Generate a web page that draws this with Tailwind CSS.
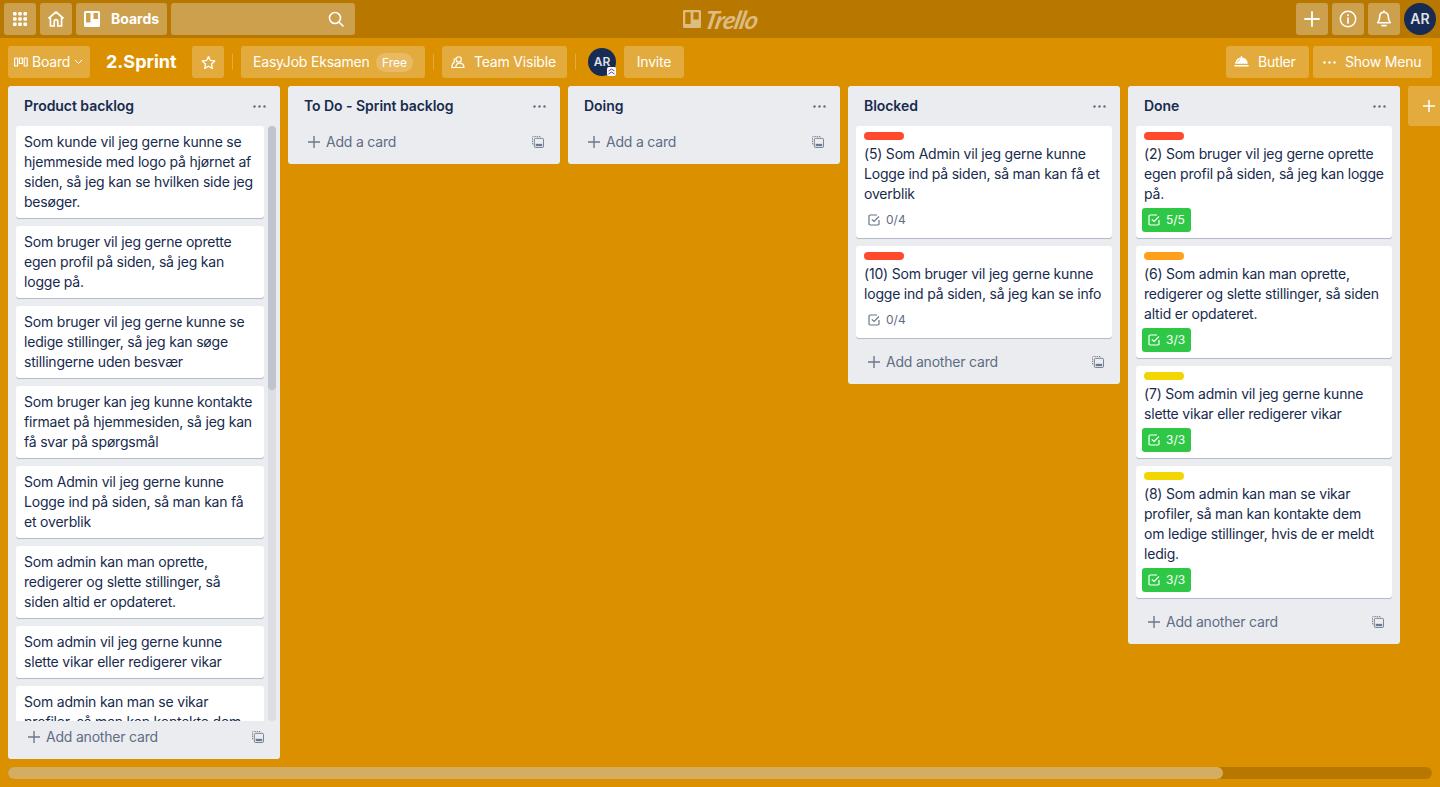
<!DOCTYPE html>
<html lang="en">
<head>
    <meta charset="UTF-8">
    <meta name="viewport" content="width=device-width, initial-scale=1.0">
    <title>2.Sprint | Trello</title>
    <script src="https://cdn.jsdelivr.net/npm/@tailwindcss/browser@4"></script>
</head>
<body class="h-[787px] w-[1440px] overflow-hidden bg-[#db9000] font-['Inter','Liberation_Sans',sans-serif] text-sm tracking-[-0.2px] text-[#172b4d] antialiased">

    <!-- top bar -->
    <header class="relative flex h-[38px] items-center gap-1 bg-[#b87800] px-1 text-white">
        <button class="flex h-8 w-8 items-center justify-center rounded-[3px] bg-white/30">
            <svg width="14" height="14" viewBox="0 0 14 14" fill="currentColor"><rect x="0" y="0" width="3.6" height="3.6" rx="1"/><rect x="5.2" y="0" width="3.6" height="3.6" rx="1"/><rect x="10.4" y="0" width="3.6" height="3.6" rx="1"/><rect x="0" y="5.2" width="3.6" height="3.6" rx="1"/><rect x="5.2" y="5.2" width="3.6" height="3.6" rx="1"/><rect x="10.4" y="5.2" width="3.6" height="3.6" rx="1"/><rect x="0" y="10.4" width="3.6" height="3.6" rx="1"/><rect x="5.2" y="10.4" width="3.6" height="3.6" rx="1"/><rect x="10.4" y="10.4" width="3.6" height="3.6" rx="1"/></svg>
        </button>
        <button class="flex h-8 w-8 items-center justify-center rounded-[3px] bg-white/30">
            <svg width="18" height="18" viewBox="0 0 18 18" fill="none" stroke="currentColor" stroke-width="1.7" stroke-linejoin="round"><path d="M1.5 8.5 9 1.8l7.5 6.7M3.4 7v9h3.8v-4.6a1.8 1.8 0 0 1 3.6 0V16h3.8V7"/></svg>
        </button>
        <button class="flex h-8 w-[91px] items-center gap-[11px] rounded-[3px] bg-white/30 pl-2 font-bold tracking-normal">
            <svg width="16" height="16" viewBox="0 0 16 16" fill="currentColor"><path fill-rule="evenodd" d="M1.5 0h13A1.5 1.5 0 0 1 16 1.5v13a1.5 1.5 0 0 1-1.500 1.500h-13A1.500 1.500 0 0 1 0 14.500v-13A1.500 1.500 0 0 1 1.500 0ZM2 2v9.500h4.500V2H2Zm7.500 0v6H14V2H9.500Z"/></svg>
            <span>Boards</span>
        </button>
        <div class="flex h-8 w-[184px] items-center justify-end rounded-[3px] bg-white/30 pr-[11px]">
            <svg width="16" height="16" viewBox="0 0 16 16" fill="none" stroke="currentColor" stroke-width="1.600"><circle cx="7" cy="7" r="5.500"/><path d="m11 11 4 4" stroke-linecap="round"/></svg>
        </div>
        <div class="absolute top-0 left-[683px] flex h-[38px] items-center gap-[4px] text-[#dcbc80]">
            <svg width="18" height="18" viewBox="0 0 16 16" fill="currentColor"><path fill-rule="evenodd" d="M1.200 0h13.600A1.200 1.200 0 0 1 16 1.200v13.600a1.200 1.200 0 0 1-1.200 1.200H1.200A1.200 1.200 0 0 1 0 14.800V1.200A1.200 1.200 0 0 1 1.200 0ZM2 2v10.500h4.800V2H2Zm7.200 0v6.500H14V2H9.200Z"/></svg>
            <span class="inline-block -skew-x-[12deg] font-['Lato',sans-serif] text-[25px] leading-none font-bold tracking-[-0.8px] italic">Trello</span>
        </div>
        <div class="flex-1"></div>
        <button class="flex h-8 w-8 items-center justify-center rounded-[3px] bg-white/30">
            <svg width="16" height="16" viewBox="0 0 16 16" fill="none" stroke="currentColor" stroke-width="1.800" stroke-linecap="round"><path d="M8 1v14M1 8h14"/></svg>
        </button>
        <button class="flex h-8 w-8 items-center justify-center rounded-[3px] bg-white/30">
            <svg width="18" height="18" viewBox="0 0 18 18" fill="none" stroke="currentColor" stroke-width="1.500"><circle cx="9" cy="9" r="7.700"/><path d="M9 8v5" stroke-width="1.700" stroke-linecap="round"/><circle cx="9" cy="5.300" r="1" fill="currentColor" stroke="none"/></svg>
        </button>
        <button class="flex h-8 w-8 items-center justify-center rounded-[3px] bg-white/30">
            <svg width="16" height="18" viewBox="0 0 16 18" fill="none" stroke="currentColor" stroke-width="1.600" stroke-linejoin="round"><path d="M8 2.200c-2.700 0-4.300 2-4.300 4.600 0 3.300-.8 4.500-2 6h12.600c-1.200-1.500-2-2.700-2-6 0-2.600-1.600-4.600-4.300-4.600Z"/><path d="M6 15.600h4" stroke-linecap="round"/><path d="M8 1v1" stroke-linecap="round"/></svg>
        </button>
        <div class="flex h-8 w-8 items-center justify-center rounded-full bg-[#172b54] text-sm font-semibold tracking-normal text-[#dfe1e6]">AR</div>
    </header>

    <!-- board bar -->
    <div class="flex h-[48px] items-start justify-between pt-2 pr-2 pl-2 text-white">
        <div class="flex items-center">
            <button class="flex h-8 w-[82px] items-center gap-[4px] rounded-[3px] bg-white/24 pl-[6px]">
                <svg width="14" height="12" viewBox="0 0 14 12" fill="none" stroke="currentColor" stroke-width="1.200"><rect x=".6" y="2" width="3" height="8" rx=".6"/><rect x="5.400" y="2" width="3" height="5.500" rx=".6"/><rect x="10.200" y="2" width="3" height="8" rx=".6"/></svg>
                <span>Board</span>
                <svg width="9" height="6" viewBox="0 0 9 6" fill="none" stroke="currentColor" stroke-width="1"><path d="m1 1 3.500 3.500L8 1"/></svg>
            </button>
            <h1 class="ml-4 w-[70px] text-lg font-bold tracking-normal whitespace-nowrap">2.Sprint</h1>
            <button class="ml-4 flex h-8 w-8 items-center justify-center rounded-[3px] bg-white/24">
                <svg width="15" height="15" viewBox="0 0 16 16" fill="none" stroke="currentColor" stroke-width="1.400" stroke-linejoin="round"><path d="m8 1.500 2 4.300 4.700.6-3.500 3.200.9 4.700L8 12l-4.100 2.300.9-4.700L1.300 6.400 6 5.800 8 1.500Z"/></svg>
            </button>
            <span class="mx-2 h-4 w-px bg-white/24"></span>
            <button class="flex h-8 w-[184px] items-center justify-between rounded-[3px] bg-white/24 pr-3 pl-3 whitespace-nowrap">
                <span>EasyJob Eksamen</span>
                <span class="rounded-full bg-white/20 px-[6px] py-px text-xs leading-[17px] tracking-normal">Free</span>
            </button>
            <span class="mx-2 h-4 w-px bg-white/24"></span>
            <button class="flex h-8 w-[125px] items-center gap-[9px] rounded-[3px] bg-white/24 pl-[9px] whitespace-nowrap">
                <svg width="14" height="14" viewBox="0 0 16 16" fill="none" stroke="currentColor" stroke-width="1.300" stroke-linejoin="round"><circle cx="8.800" cy="5" r="3"/><path d="M5.500 14.300h9.300c0-3-1.900-5-5-5s-4.300 2-4.300 5Z"/><path d="M5.200 3.800C3 5 3.200 7.200 4 8 2.200 9 1 11 1 14.300h4.500"/></svg>
                <span>Team Visible</span>
            </button>
            <span class="mx-2 h-4 w-px bg-white/24"></span>
            <div class="relative ml-[4px] flex h-7 w-7 items-center justify-center rounded-full bg-[#172b54] text-xs font-semibold tracking-normal text-[#dfe1e6]">
                AR
                <span class="absolute right-0 bottom-0 flex h-[9px] w-[9px] items-center justify-center rounded-[2px] bg-white">
                    <svg width="7" height="7" viewBox="0 0 7 7" fill="none" stroke="#5243aa" stroke-width="1"><path d="m.5 3 3-2 3 2M.5 6l3-2 3 2"/></svg>
                </span>
            </div>
            <button class="ml-2 h-8 w-[60px] rounded-[3px] bg-white/24">Invite</button>
        </div>
        <div class="flex items-center gap-1">
            <button class="flex h-8 w-[83px] items-center gap-[9px] rounded-[3px] bg-white/24 pl-[8px]">
                <svg width="15" height="14" viewBox="0 0 15 14" fill="currentColor"><path d="M7.500 2.500C3.800 2.500 1.500 5.300 1.200 8.800h12.600C13.500 5.300 11.200 2.500 7.500 2.500Z"/><rect x="6.800" y="1" width="1.400" height="2"/><rect x=".4" y="10" width="14.200" height="1.500"/><path d="M3.200 7.500C3.600 6 4.700 5 6 4.600" fill="none" stroke="#e3aa3d" stroke-width=".8"/></svg>
                <span>Butler</span>
            </button>
            <button class="flex h-8 w-[119px] items-center gap-[9px] rounded-[3px] bg-white/24 pl-[10px]">
                <svg width="13" height="3" viewBox="0 0 13 3" fill="currentColor"><circle cx="1.500" cy="1.500" r="1.200"/><circle cx="6.500" cy="1.500" r="1.200"/><circle cx="11.500" cy="1.500" r="1.200"/></svg>
                <span>Show Menu</span>
            </button>
        </div>
    </div>

    <!-- lists -->
    <main class="flex h-[673px] items-start gap-2 pl-2">

        <section class="flex h-[673px] w-[272px] flex-none flex-col rounded-[3px] bg-[#ebecf0]">
            <div class="flex h-10 flex-none items-center justify-between pr-[14px] pl-4 font-semibold tracking-[-0.05px]">
                <h2>Product backlog</h2>
                <svg width="13" height="3" viewBox="0 0 13 3" fill="#5e6c84"><circle cx="1.500" cy="1.500" r="1.200"/><circle cx="6.500" cy="1.500" r="1.200"/><circle cx="11.500" cy="1.500" r="1.200"/></svg>
            </div>
            <div class="flex min-h-0 flex-1 gap-1 pr-1 pl-2">
                <div class="flex min-h-0 w-[248px] flex-none flex-col gap-2 overflow-hidden">
                    <div class="flex-none rounded-[3px] bg-white px-2 pt-1.5 pb-1.5 leading-5 shadow-[0_1px_0_#b3bac9]"><p>Som kunde vil jeg gerne kunne se hjemmeside med logo på hjørnet af siden, så jeg kan se hvilken side jeg besøger.</p></div>
                    <div class="flex-none rounded-[3px] bg-white px-2 pt-1.5 pb-1.5 leading-5 shadow-[0_1px_0_#b3bac9]"><p>Som bruger vil jeg gerne oprette egen profil på siden, så jeg kan logge på.</p></div>
                    <div class="flex-none rounded-[3px] bg-white px-2 pt-1.5 pb-1.5 leading-5 shadow-[0_1px_0_#b3bac9]"><p>Som bruger vil jeg gerne kunne se ledige stillinger, så jeg kan søge stillingerne uden besvær</p></div>
                    <div class="flex-none rounded-[3px] bg-white px-2 pt-1.5 pb-1.5 leading-5 shadow-[0_1px_0_#b3bac9]"><p>Som bruger kan jeg kunne kontakte firmaet på hjemmesiden, så jeg kan få svar på spørgsmål</p></div>
                    <div class="flex-none rounded-[3px] bg-white px-2 pt-1.5 pb-1.5 leading-5 shadow-[0_1px_0_#b3bac9]"><p>Som Admin vil jeg gerne kunne Logge ind på siden, så man kan få et overblik</p></div>
                    <div class="flex-none rounded-[3px] bg-white px-2 pt-1.5 pb-1.5 leading-5 shadow-[0_1px_0_#b3bac9]"><p>Som admin kan man oprette, redigerer og slette stillinger, så siden altid er opdateret.</p></div>
                    <div class="flex-none rounded-[3px] bg-white px-2 pt-1.5 pb-1.5 leading-5 shadow-[0_1px_0_#b3bac9]"><p>Som admin vil jeg gerne kunne slette vikar eller redigerer vikar</p></div>
                    <div class="flex-none rounded-[3px] bg-white px-2 pt-1.5 pb-1.5 leading-5 shadow-[0_1px_0_#b3bac9]"><p>Som admin kan man se vikar profiler, så man kan kontakte dem om ledige stillinger, hvis de er meldt ledig.</p></div>
                </div>
                <div class="h-full w-2 rounded-full bg-[#dcdee4]">
                    <div class="h-[264px] rounded-full bg-[#bfc4ce]"></div>
                </div>
            </div>
            <div class="flex h-[38px] flex-none items-start justify-between pt-[6px] pr-4 pl-5 text-[#5e6c84]">
                <span class="flex items-center gap-[6px] leading-5">
                    <svg width="12" height="12" viewBox="0 0 12 12" fill="none" stroke="#6b778c" stroke-width="1.400"><path d="M6 0v12M0 6h12"/></svg>
                    Add another card
                </span>
                <svg class="mt-1" width="12" height="12" viewBox="0 0 13 13" fill="none" stroke="#6b778c" stroke-width="1"><path d="M.5 9V1.500a1 1 0 0 1 1-1H9" stroke-dasharray="1.500 1"/><rect x="2.500" y="2.500" width="10" height="10" rx="1.500"/><rect x="4" y="8.500" width="7" height="2.500" fill="#6b778c" stroke="none"/></svg>
            </div>
        </section>

        <section class="w-[272px] flex-none rounded-[3px] bg-[#ebecf0]">
            <div class="flex h-10 items-center justify-between pr-[14px] pl-4 font-semibold tracking-[-0.05px]">
                <h2>To Do - Sprint backlog</h2>
                <svg width="13" height="3" viewBox="0 0 13 3" fill="#5e6c84"><circle cx="1.500" cy="1.500" r="1.200"/><circle cx="6.500" cy="1.500" r="1.200"/><circle cx="11.500" cy="1.500" r="1.200"/></svg>
            </div>
            <div class="flex h-[38px] items-start justify-between pt-[6px] pr-4 pl-5 text-[#5e6c84]">
                <span class="flex items-center gap-[6px] leading-5">
                    <svg width="12" height="12" viewBox="0 0 12 12" fill="none" stroke="#6b778c" stroke-width="1.400"><path d="M6 0v12M0 6h12"/></svg>
                    Add a card
                </span>
                <svg class="mt-1" width="12" height="12" viewBox="0 0 13 13" fill="none" stroke="#6b778c" stroke-width="1"><path d="M.5 9V1.500a1 1 0 0 1 1-1H9" stroke-dasharray="1.500 1"/><rect x="2.500" y="2.500" width="10" height="10" rx="1.500"/><rect x="4" y="8.500" width="7" height="2.500" fill="#6b778c" stroke="none"/></svg>
            </div>
        </section>

        <section class="w-[272px] flex-none rounded-[3px] bg-[#ebecf0]">
            <div class="flex h-10 items-center justify-between pr-[14px] pl-4 font-semibold tracking-[-0.05px]">
                <h2>Doing</h2>
                <svg width="13" height="3" viewBox="0 0 13 3" fill="#5e6c84"><circle cx="1.500" cy="1.500" r="1.200"/><circle cx="6.500" cy="1.500" r="1.200"/><circle cx="11.500" cy="1.500" r="1.200"/></svg>
            </div>
            <div class="flex h-[38px] items-start justify-between pt-[6px] pr-4 pl-5 text-[#5e6c84]">
                <span class="flex items-center gap-[6px] leading-5">
                    <svg width="12" height="12" viewBox="0 0 12 12" fill="none" stroke="#6b778c" stroke-width="1.400"><path d="M6 0v12M0 6h12"/></svg>
                    Add a card
                </span>
                <svg class="mt-1" width="12" height="12" viewBox="0 0 13 13" fill="none" stroke="#6b778c" stroke-width="1"><path d="M.5 9V1.500a1 1 0 0 1 1-1H9" stroke-dasharray="1.500 1"/><rect x="2.500" y="2.500" width="10" height="10" rx="1.500"/><rect x="4" y="8.500" width="7" height="2.500" fill="#6b778c" stroke="none"/></svg>
            </div>
        </section>

        <section class="w-[272px] flex-none rounded-[3px] bg-[#ebecf0]">
            <div class="flex h-10 items-center justify-between pr-[14px] pl-4 font-semibold tracking-[-0.05px]">
                <h2>Blocked</h2>
                <svg width="13" height="3" viewBox="0 0 13 3" fill="#5e6c84"><circle cx="1.500" cy="1.500" r="1.200"/><circle cx="6.500" cy="1.500" r="1.200"/><circle cx="11.500" cy="1.500" r="1.200"/></svg>
            </div>
            <div class="flex flex-col gap-2 px-2">
                <div class="h-[112px] rounded-[3px] bg-white px-2 pt-1.5 leading-5 shadow-[0_1px_0_#b3bac9]">
                    <div class="mb-1 h-2 w-10 rounded-full bg-[#ff4a2d]"></div>
                    <p>(5) Som Admin vil jeg gerne kunne Logge ind på siden, så man kan få et overblik</p>
                    <div class="mt-1 flex h-6 items-center gap-[6px] pl-1 text-xs tracking-normal text-[#5e6c84]">
                        <svg width="12" height="12" viewBox="0 0 12 12" fill="none" stroke="#6b778c" stroke-width="1.200"><path d="M11 6v3.900A1.100 1.100 0 0 1 9.900 11H2.100A1.100 1.100 0 0 1 1 9.900V2.100A1.100 1.100 0 0 1 2.100 1H9"/><path d="m3.800 5.300 2.200 2.200 5-5"/></svg>
                        <span>0/4</span>
                    </div>
                </div>
                <div class="h-[92px] rounded-[3px] bg-white px-2 pt-1.5 leading-5 shadow-[0_1px_0_#b3bac9]">
                    <div class="mb-1 h-2 w-10 rounded-full bg-[#ff4a2d]"></div>
                    <p>(10) Som bruger vil jeg gerne kunne logge ind på siden, så jeg kan se info</p>
                    <div class="mt-1 flex h-6 items-center gap-[6px] pl-1 text-xs tracking-normal text-[#5e6c84]">
                        <svg width="12" height="12" viewBox="0 0 12 12" fill="none" stroke="#6b778c" stroke-width="1.200"><path d="M11 6v3.900A1.100 1.100 0 0 1 9.900 11H2.100A1.100 1.100 0 0 1 1 9.900V2.100A1.100 1.100 0 0 1 2.100 1H9"/><path d="m3.800 5.300 2.200 2.200 5-5"/></svg>
                        <span>0/4</span>
                    </div>
                </div>
            </div>
            <div class="mt-2 flex h-[38px] items-start justify-between pt-[6px] pr-4 pl-5 text-[#5e6c84]">
                <span class="flex items-center gap-[6px] leading-5">
                    <svg width="12" height="12" viewBox="0 0 12 12" fill="none" stroke="#6b778c" stroke-width="1.400"><path d="M6 0v12M0 6h12"/></svg>
                    Add another card
                </span>
                <svg class="mt-1" width="12" height="12" viewBox="0 0 13 13" fill="none" stroke="#6b778c" stroke-width="1"><path d="M.5 9V1.500a1 1 0 0 1 1-1H9" stroke-dasharray="1.500 1"/><rect x="2.500" y="2.500" width="10" height="10" rx="1.500"/><rect x="4" y="8.500" width="7" height="2.500" fill="#6b778c" stroke="none"/></svg>
            </div>
        </section>

        <section class="w-[272px] flex-none rounded-[3px] bg-[#ebecf0]">
            <div class="flex h-10 items-center justify-between pr-[14px] pl-4 font-semibold tracking-[-0.05px]">
                <h2>Done</h2>
                <svg width="13" height="3" viewBox="0 0 13 3" fill="#5e6c84"><circle cx="1.500" cy="1.500" r="1.200"/><circle cx="6.500" cy="1.500" r="1.200"/><circle cx="11.500" cy="1.500" r="1.200"/></svg>
            </div>
            <div class="flex flex-col gap-2 px-2">
                <div class="h-[112px] rounded-[3px] bg-white px-2 pt-1.5 leading-5 shadow-[0_1px_0_#b3bac9]">
                    <div class="mb-1 h-2 w-10 rounded-full bg-[#ff4a2d]"></div>
                    <p>(2) Som bruger vil jeg gerne oprette egen profil på siden, så jeg kan logge på.</p>
                    <div class="mt-1 -ml-0.5 flex h-6 w-[49px] items-center gap-[6px] rounded-[3px] bg-[#2fc846] pl-[6px] text-xs tracking-normal text-white">
                        <svg width="12" height="12" viewBox="0 0 12 12" fill="none" stroke="currentColor" stroke-width="1.200"><path d="M11 6v3.900A1.100 1.100 0 0 1 9.900 11H2.100A1.100 1.100 0 0 1 1 9.900V2.100A1.100 1.100 0 0 1 2.100 1H9"/><path d="m3.800 5.300 2.200 2.200 5-5"/></svg>
                        <span>5/5</span>
                    </div>
                </div>
                <div class="h-[112px] rounded-[3px] bg-white px-2 pt-1.5 leading-5 shadow-[0_1px_0_#b3bac9]">
                    <div class="mb-1 h-2 w-10 rounded-full bg-[#ff9f1a]"></div>
                    <p>(6) Som admin kan man oprette, redigerer og slette stillinger, så siden altid er opdateret.</p>
                    <div class="mt-1 -ml-0.5 flex h-6 w-[49px] items-center gap-[6px] rounded-[3px] bg-[#2fc846] pl-[6px] text-xs tracking-normal text-white">
                        <svg width="12" height="12" viewBox="0 0 12 12" fill="none" stroke="currentColor" stroke-width="1.200"><path d="M11 6v3.900A1.100 1.100 0 0 1 9.900 11H2.100A1.100 1.100 0 0 1 1 9.900V2.100A1.100 1.100 0 0 1 2.100 1H9"/><path d="m3.800 5.300 2.200 2.200 5-5"/></svg>
                        <span>3/3</span>
                    </div>
                </div>
                <div class="h-[92px] rounded-[3px] bg-white px-2 pt-1.5 leading-5 shadow-[0_1px_0_#b3bac9]">
                    <div class="mb-1 h-2 w-10 rounded-full bg-[#f2d600]"></div>
                    <p>(7) Som admin vil jeg gerne kunne slette vikar eller redigerer vikar</p>
                    <div class="mt-1 -ml-0.5 flex h-6 w-[49px] items-center gap-[6px] rounded-[3px] bg-[#2fc846] pl-[6px] text-xs tracking-normal text-white">
                        <svg width="12" height="12" viewBox="0 0 12 12" fill="none" stroke="currentColor" stroke-width="1.200"><path d="M11 6v3.900A1.100 1.100 0 0 1 9.900 11H2.100A1.100 1.100 0 0 1 1 9.900V2.100A1.100 1.100 0 0 1 2.100 1H9"/><path d="m3.800 5.300 2.200 2.200 5-5"/></svg>
                        <span>3/3</span>
                    </div>
                </div>
                <div class="h-[132px] rounded-[3px] bg-white px-2 pt-1.5 leading-5 shadow-[0_1px_0_#b3bac9]">
                    <div class="mb-1 h-2 w-10 rounded-full bg-[#f2d600]"></div>
                    <p>(8) Som admin kan man se vikar profiler, så man kan kontakte dem om ledige stillinger, hvis de er meldt ledig.</p>
                    <div class="mt-1 -ml-0.5 flex h-6 w-[49px] items-center gap-[6px] rounded-[3px] bg-[#2fc846] pl-[6px] text-xs tracking-normal text-white">
                        <svg width="12" height="12" viewBox="0 0 12 12" fill="none" stroke="currentColor" stroke-width="1.200"><path d="M11 6v3.900A1.100 1.100 0 0 1 9.900 11H2.100A1.100 1.100 0 0 1 1 9.900V2.100A1.100 1.100 0 0 1 2.100 1H9"/><path d="m3.800 5.300 2.200 2.200 5-5"/></svg>
                        <span>3/3</span>
                    </div>
                </div>
            </div>
            <div class="mt-2 flex h-[38px] items-start justify-between pt-[6px] pr-4 pl-5 text-[#5e6c84]">
                <span class="flex items-center gap-[6px] leading-5">
                    <svg width="12" height="12" viewBox="0 0 12 12" fill="none" stroke="#6b778c" stroke-width="1.400"><path d="M6 0v12M0 6h12"/></svg>
                    Add another card
                </span>
                <svg class="mt-1" width="12" height="12" viewBox="0 0 13 13" fill="none" stroke="#6b778c" stroke-width="1"><path d="M.5 9V1.500a1 1 0 0 1 1-1H9" stroke-dasharray="1.500 1"/><rect x="2.500" y="2.500" width="10" height="10" rx="1.500"/><rect x="4" y="8.500" width="7" height="2.500" fill="#6b778c" stroke="none"/></svg>
            </div>
        </section>

        <button class="flex h-10 w-8 flex-none items-center rounded-l-[3px] bg-white/24 pl-[15px] text-white">
            <svg width="12" height="12" viewBox="0 0 12 12" fill="none" stroke="currentColor" stroke-width="1.500"><path d="M6 0v12M0 6h12"/></svg>
        </button>
    </main>

    <!-- board scrollbar -->
    <div class="mx-2 mt-2 h-3 rounded-full bg-[#b87800]">
        <div class="h-3 w-[1215px] rounded-full bg-[#d4ad62]"></div>
    </div>

</body>
</html>
